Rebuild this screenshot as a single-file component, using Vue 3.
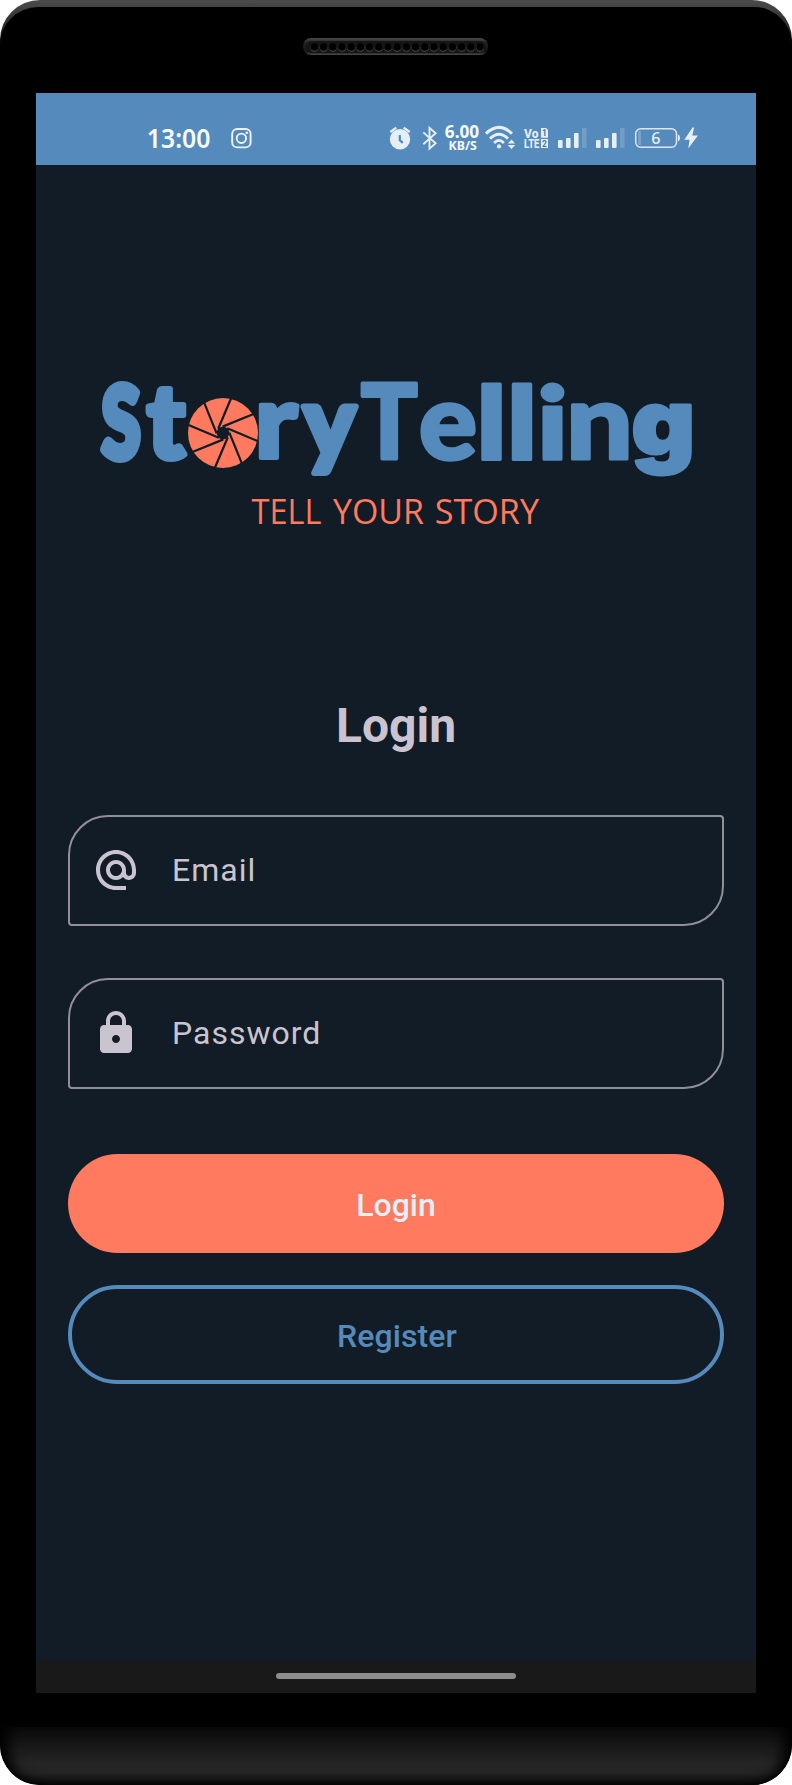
<script setup>
const speakerHoles = Array.from({ length: 19 }, (_, i) => 11.4 + i * 9.2)
const blades = Array.from({ length: 8 }, (_, i) => i * 45)
const signals = [558, 596]
const fields = [
  {
    label: 'Email',
    icon: 'M12 2C6.48 2 2 6.48 2 12s4.48 10 10 10h5v-2h-5c-4.34 0-8-3.66-8-8s3.66-8 8-8 8 3.66 8 8v1.43c0 .79-.71 1.57-1.5 1.57s-1.5-.78-1.5-1.57V12c0-2.76-2.24-5-5-5s-5 2.24-5 5 2.24 5 5 5c1.38 0 2.64-.56 3.54-1.47.65.89 1.77 1.47 2.96 1.47 1.97 0 3.5-1.6 3.5-3.57V12c0-5.52-4.48-10-10-10zm0 13c-1.66 0-3-1.34-3-3s1.34-3 3-3 3 1.34 3 3-1.34 3-3 3z',
  },
  {
    label: 'Password',
    icon: 'M18 8h-1V6c0-2.76-2.24-5-5-5S7 3.24 7 6v2H6c-1.1 0-2 .9-2 2v10c0 1.1.9 2 2 2h12c1.1 0 2-.9 2-2V10c0-1.1-.9-2-2-2zm-6 9c-1.1 0-2-.9-2-2s.9-2 2-2 2 .9 2 2-.9 2-2 2zM15 8H9V6c0-1.66 1.34-3 3-3s3 1.34 3 3v2z',
  },
]
/* Each wordmark glyph: character, left edge, advance width, size, baseline, outline weight. */
const glyphs = [
  { c: 'S', x: 101.5, w: 39, s: 99, y: 457.5, k: 8 },
  { c: 't', x: 147, w: 38, s: 102, y: 457.5, k: 6 },
  { c: 'r', x: 254.5, w: 43, s: 103, y: 458, k: 4 },
  { c: 'y', x: 303.5, w: 52, s: 97, y: 457, k: 6 },
  { c: 'T', x: 361, w: 56.5, s: 103, y: 458, k: 4 },
  { c: 'e', x: 419, w: 58, s: 105, y: 459, k: 3.4 },
  { c: 'l', x: 476, w: 31, s: 101, y: 458.5, k: 3 },
  { c: 'l', x: 506.5, w: 31, s: 101, y: 458.5, k: 3 },
  { c: 'i', x: 537, w: 31, s: 101, y: 458.5, k: 3 },
  { c: 'n', x: 566, w: 67, s: 104, y: 458.5, k: 3 },
  { c: 'g', x: 631.5, w: 63.5, s: 91, y: 455, k: 3, f: 'Inter' },
]
</script>

<template>
  <div class="phone">
    <div class="shell">
      <header class="forehead">
        <svg class="speaker" width="186" height="18" viewBox="0 0 186 18">
          <defs>
            <linearGradient id="spk" x1="0" y1="0" x2="0" y2="1">
              <stop offset="0" stop-color="#4a4a4a" />
              <stop offset=".3" stop-color="#202020" />
              <stop offset=".8" stop-color="#161616" />
              <stop offset="1" stop-color="#4a4a4a" />
            </linearGradient>
          </defs>
          <rect x="0" y="0" width="185" height="17" rx="8" fill="url(#spk)" />
          <rect x="3" y="3" width="180" height="12" rx="6" fill="#151515" />
          <g v-for="x in speakerHoles" :key="x">
            <circle :cx="x" cy="9.8" r="4" fill="#484848" />
            <circle :cx="x" cy="9" r="3.8" fill="#000" />
          </g>
        </svg>
      </header>

      <main class="screen">
        <div class="status">
          <svg width="130" height="72" viewBox="130 93 130 72">
            <text x="146.8" y="147.8" font-family="Noto Sans" font-size="26.6" font-weight="600" fill="#f7fafd" textLength="63.6" lengthAdjust="spacingAndGlyphs">13:00</text>
            <g fill="none" stroke="#edf3f9" stroke-width="1.9">
              <rect x="232.2" y="129" width="18.4" height="18.4" rx="5" />
              <circle cx="241.4" cy="138.3" r="4.7" />
            </g>
            <circle cx="246.8" cy="132.8" r="1.3" fill="#edf3f9" />
          </svg>
          <svg width="330" height="72" viewBox="380 93 330 72" fill="#e6eef7">
            <circle cx="400" cy="139.3" r="10.2" />
            <path d="M390.3 132l6-4.3M409.7 132l-6-4.3" stroke="#e6eef7" stroke-width="2.2" fill="none" />
            <path d="M399.8 135v5.2l3 2.6" stroke="#548abc" stroke-width="2.2" fill="none" />
            <path d="M423.3 132.4l12.3 10.8-6.1 5.5v-20.9l6.1 5.5-12.3 10.9" stroke="#e6eef7" stroke-width="1.9" fill="none" />
            <g font-family="Noto Sans" font-weight="700" fill="#f5f9fd">
              <text x="444.8" y="138.4" font-size="17.8" textLength="34.4" lengthAdjust="spacingAndGlyphs">6.00</text>
              <text x="448.6" y="149.6" font-size="13.2" textLength="28.2" lengthAdjust="spacingAndGlyphs">KB/S</text>
            </g>
            <g fill="none" stroke="#e6eef7" stroke-width="2.9">
              <path d="M486 133.6q13-12.4 26 0" />
              <path d="M490 138.6q9-8.8 18 0" />
              <path d="M494.1 142.9q4.9-5 9.8 0" />
            </g>
            <circle cx="499" cy="146.4" r="2.1" />
            <path d="M511.5 139.5l3.7 4h-7.4zM511.5 149l3.7-4h-7.4z" />
            <g font-family="Roboto" font-weight="800" font-size="13.4">
              <text x="524" y="137.6" textLength="14.4" lengthAdjust="spacingAndGlyphs">Vo</text>
              <text x="524" y="148.2" textLength="15.4" lengthAdjust="spacingAndGlyphs">LTE</text>
            </g>
            <path d="M541 128h5l2 2v7.7h-7zM541 139h7v9h-7z" />
            <g font-family="Roboto" font-weight="700" font-size="8.5" fill="#4279ad" text-anchor="middle">
              <text x="544.4" y="136">1</text>
              <text x="544.5" y="146.6">2</text>
            </g>
            <g v-for="x in signals" :key="x">
              <rect :x="x" y="140" width="4.6" height="8" rx="1" />
              <rect :x="x + 8" y="138" width="4.6" height="10" rx="1" />
              <rect :x="x + 16" y="133" width="4.6" height="15" rx="1" />
              <rect :x="x + 24" y="128" width="4.6" height="20" rx="1" opacity=".2" />
            </g>
            <rect x="635.7" y="128.8" width="40.8" height="18.4" rx="5" fill="none" stroke="#dce7f3" stroke-width="1.5" />
            <rect x="638" y="131" width="3" height="14" rx="1" opacity=".25" />
            <path d="M678 134.5q2 .5 2 3.5t-2 3.5z" />
            <text x="655.8" y="144" font-family="Noto Sans" font-size="16.2" font-weight="500" text-anchor="middle">6</text>
            <path d="M692.5 127.6l-8.2 12.1h5.2l-1.2 8.8 9.6-13h-5.6l1.8-7.9z" />
          </svg>
        </div>

        <svg class="logo" width="640" height="125" viewBox="76 370 640 125">
          <g font-weight="900" fill="#548abc" stroke="#548abc" stroke-linejoin="round">
            <text v-for="g in glyphs" :key="g.x" :x="g.x" :y="g.y" :font-size="g.s" :stroke-width="g.k" :font-family="g.f || 'Lato'" :textLength="g.w" lengthAdjust="spacingAndGlyphs">{{ g.c }}</text>
          </g>
          <g transform="translate(223 433)">
            <circle r="35" fill="#ff7a5e" />
            <circle r="6.3" fill="#121c26" />
            <path v-for="a in blades" :key="a" d="M8.2-35L-4.8-4.2" :transform="`rotate(${a})`" stroke="#121c26" stroke-width="2.2" />
          </g>
        </svg>
        <svg class="tagline" width="300" height="36" viewBox="246 495 300 36">
          <g font-family="Open Sans" font-size="34" fill="#ff7a5e">
            <text x="251.5" y="523.8" textLength="70" lengthAdjust="spacingAndGlyphs">TELL</text>
            <text x="333" y="523.8" textLength="91" lengthAdjust="spacingAndGlyphs">YOUR</text>
            <text x="434.8" y="523.8" textLength="104.2" lengthAdjust="spacingAndGlyphs">STORY</text>
          </g>
        </svg>

        <h1 class="title">Login</h1>

        <form class="form" @submit.prevent>
          <label v-for="f in fields" :key="f.label" class="field">
            <svg width="48" height="48" viewBox="0 0 24 24" fill="#cac4d0"><path :d="f.icon" /></svg>
            <span>{{ f.label }}</span>
          </label>
          <button class="btn primary">Login</button>
          <button class="btn outline">Register</button>
        </form>

        <div class="navbar"><div class="pill"></div></div>
      </main>
    </div>
    <div class="chin"></div>
  </div>
</template>

<style>
body {
  margin: 0;
  background: #fff;
}
</style>

<style scoped>
svg {
  overflow: visible;
}
.phone {
  box-sizing: border-box;
  width: 792px;
  height: 1785px;
  display: flex;
  flex-direction: column;
  padding-top: 7px;
  border-radius: 40px;
  overflow: hidden;
  background: linear-gradient(#4b4b4b, #404040 10px, #303030 22px, #000 56px);
}
.shell {
  height: 1720px;
  background: #000;
  border-radius: 38px 38px 0 0;
}
.forehead {
  height: 86px;
  display: flex;
  justify-content: center;
}
.speaker {
  margin-top: 31px;
}
.screen {
  width: 720px;
  height: 1600px;
  margin: 0 auto;
  display: flex;
  flex-direction: column;
  align-items: center;
  background: #121c26;
  font-family: Roboto, sans-serif;
}
.status {
  box-sizing: border-box;
  width: 720px;
  height: 72px;
  flex: none;
  display: flex;
  justify-content: space-between;
  padding: 0 46px 0 94px;
  background: #548abc;
}
.logo {
  flex: none;
  margin-top: 205px;
}
.tagline {
  flex: none;
}
.title {
  margin: 167px 0 0;
  font-size: 48px;
  line-height: 56px;
  font-weight: 700;
  color: #cac4d0;
}
.form {
  width: 656px;
  margin-top: 61px;
  display: flex;
  flex-direction: column;
}
.field {
  box-sizing: border-box;
  height: 111px;
  display: flex;
  align-items: center;
  gap: 32px;
  padding: 0 0 2px 22px;
  margin-bottom: 52px;
  border: 2px solid #938f99;
  border-radius: 40px 4px;
  font-size: 32px;
  letter-spacing: 1px;
  color: #cac4d0;
}
.btn {
  box-sizing: border-box;
  height: 99px;
  padding: 2px 0 0;
  border: 0;
  border-radius: 50px;
  font: 500 32px Roboto, sans-serif;
}
.primary {
  margin-top: 13px;
  background: #ff7a5e;
  color: #e6eef7;
}
.outline {
  margin-top: 32px;
  padding-left: 2px;
  border: 4px solid #548abc;
  background: transparent;
  color: #548abc;
  letter-spacing: 0.1px;
}
.navbar {
  width: 720px;
  height: 32px;
  margin-top: auto;
  display: flex;
  align-items: center;
  justify-content: center;
  background: #191919;
}
.pill {
  width: 240px;
  height: 6px;
  margin-bottom: 2px;
  border-radius: 3px;
  background: #8c8c8c;
}
.chin {
  height: 58px;
  border-radius: 0 0 40px 40px;
  background: linear-gradient(#0c0c0c, #121212 20%, #252525 62%, #252525 78%, #171717 90%, #080808);
  box-shadow: inset 14px 0 14px -6px #000, inset -14px 0 14px -6px #000;
}
</style>
